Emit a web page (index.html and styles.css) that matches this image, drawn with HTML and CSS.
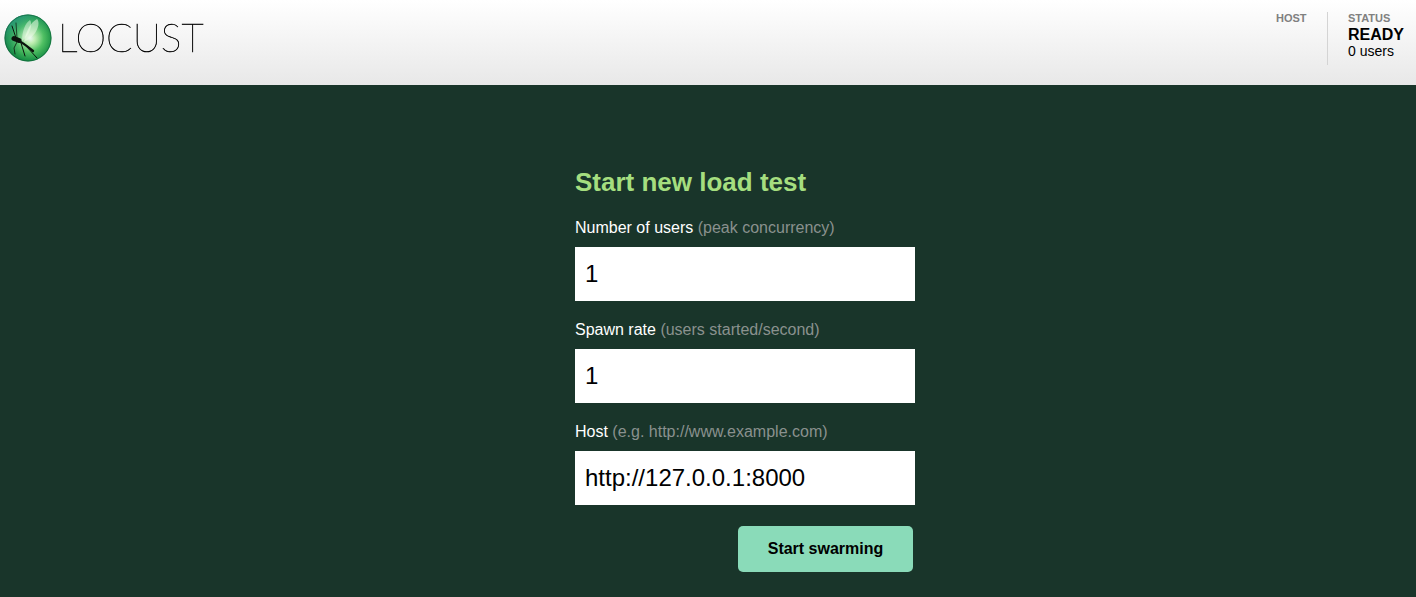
FILE: index.html
```html
<!DOCTYPE html>
<html lang="en">
<head>
<meta charset="utf-8">
<title>Locust</title>
<link rel="stylesheet" href="styles.css">
</head>
<body>
<header class="top">
  <div class="brand">
    <svg class="globe" width="48" height="48" viewBox="0 0 48 48" aria-hidden="true">
      <defs>
        <radialGradient id="ball" cx="0.54" cy="0.5" r="0.56">
          <stop offset="0" stop-color="#ffffff"/>
          <stop offset="0.2" stop-color="#c4f0b4"/>
          <stop offset="0.52" stop-color="#50c063"/>
          <stop offset="0.85" stop-color="#1a9045"/>
          <stop offset="1" stop-color="#0c6a34"/>
        </radialGradient>
        <linearGradient id="rim" x1="0" y1="0" x2="0.5" y2="0.7">
          <stop offset="0" stop-color="#2f9c9a" stop-opacity="1"/>
          <stop offset="0.5" stop-color="#3aa88a" stop-opacity="0.3"/>
          <stop offset="1" stop-color="#3aa88a" stop-opacity="0"/>
        </linearGradient>
      </defs>
      <circle cx="24" cy="24" r="23.5" fill="url(#ball)"/>
      <circle cx="24" cy="24" r="23.5" fill="url(#rim)"/>
      <circle cx="24" cy="24" r="23" fill="none" stroke="#0d5f3a" stroke-width="1" opacity="0.6"/>
      <path d="M20 28 C22 17 27 8 33 5 C37 9 33 22 20 28Z" fill="#eefbe8" opacity="0.55"/>
      <path d="M18 27 C18 18 21 9 26 6 C29 10 26 21 18 27Z" fill="#f4fff0" opacity="0.45"/>
      <g fill="none" stroke="#0b140d" stroke-linecap="round">
        <path d="M13 26 C18 28 23 32 29 37" stroke-width="2.4"/>
        <path d="M10 24.5 L15 26.5" stroke-width="5"/>
        <path d="M17 29 L21 42" stroke-width="1"/>
        <path d="M22 32 L33 44" stroke-width="1"/>
        <path d="M12 24 L8 12" stroke-width="1"/>
        <path d="M13 24 L12 9" stroke-width="0.7"/>
        <path d="M13 28 L10 34 L11 40" stroke-width="0.8"/>
      </g>
    </svg>
    <span class="wordmark">LOCUST</span>
  </div>
  <div class="stats">
    <div class="stat stat-host"><div class="stat-label">HOST</div></div>
    <div class="stat stat-status">
      <div class="stat-label">STATUS</div>
      <div class="stat-value">READY</div>
      <div class="stat-users">0 users</div>
    </div>
  </div>
</header>
<main class="main">
  <form class="panel">
    <h2 class="title">Start new load test</h2>
    <label class="field-label">Number of users <span class="hint">(peak concurrency)</span></label>
    <input class="field" type="text" value="1">
    <label class="field-label">Spawn rate <span class="hint">(users started/second)</span></label>
    <input class="field" type="text" value="1">
    <label class="field-label">Host <span class="hint">(e.g. http://www.example.com)</span></label>
    <input class="field" type="text" value="http://127.0.0.1:8000">
    <div class="actions"><button class="submit" type="button">Start swarming</button></div>
  </form>
</main>
</body>
</html>
```
FILE: styles.css
```css
* { box-sizing: border-box; }
html, body { margin: 0; height: 100%; overflow: hidden; }
body { font-family: "Liberation Sans", Arial, sans-serif; background: #19352a; display: flex; flex-direction: column; }
.top { height: 85px; flex: none; background: linear-gradient(#ffffff, #e8e8e8); display: flex; justify-content: space-between; }
.brand { display: flex; align-items: flex-start; padding: 14px 0 0 4px; }
.globe { flex: none; }
.wordmark { font-family: "Lato", sans-serif; font-weight: 100; font-size: 39px; line-height: 46px; margin-left: 6px; color: #000; -webkit-text-stroke: 0.45px #000; will-change: opacity; }
.stats { display: flex; padding-top: 12px; }
.stat { height: 53px; }
.stat-host { width: 52px; border-right: 1px solid #d4d4d4; margin-right: 20px; }
.stat-status { width: 68px; }
.stat-label { font-size: 11px; line-height: 13px; font-weight: bold; color: #808080; }
.stat-value { font-size: 16px; line-height: 19px; font-weight: bold; color: #000; }
.stat-users { font-size: 14px; line-height: 15px; color: #000; }
.main { flex: 1; display: flex; padding-left: 575px; }
.panel { width: 340px; padding-top: 81px; display: flex; flex-direction: column; }
.title { margin: 0; font-size: 26px; line-height: 32px; font-weight: bold; color: #a5de7f; }
.field-label { margin-top: 19px; font-size: 16px; line-height: 20px; color: #fff; height: 20px; }
.title + .field-label { margin-top: 20px; }
.hint { color: #8a918e; }
.field { margin-top: 9px; width: 340px; height: 54px; border: 0; padding: 0 10px; font: 24px "Liberation Sans", Arial, sans-serif; color: #000; background: #fff; display: block; }
.actions { display: flex; justify-content: flex-end; padding-right: 2px; margin-top: 21px; }
.submit { width: 175px; height: 46px; border: 0; border-radius: 5px; background: #8adbb9; color: #000; font: bold 16px "Liberation Sans", Arial, sans-serif; }
```
